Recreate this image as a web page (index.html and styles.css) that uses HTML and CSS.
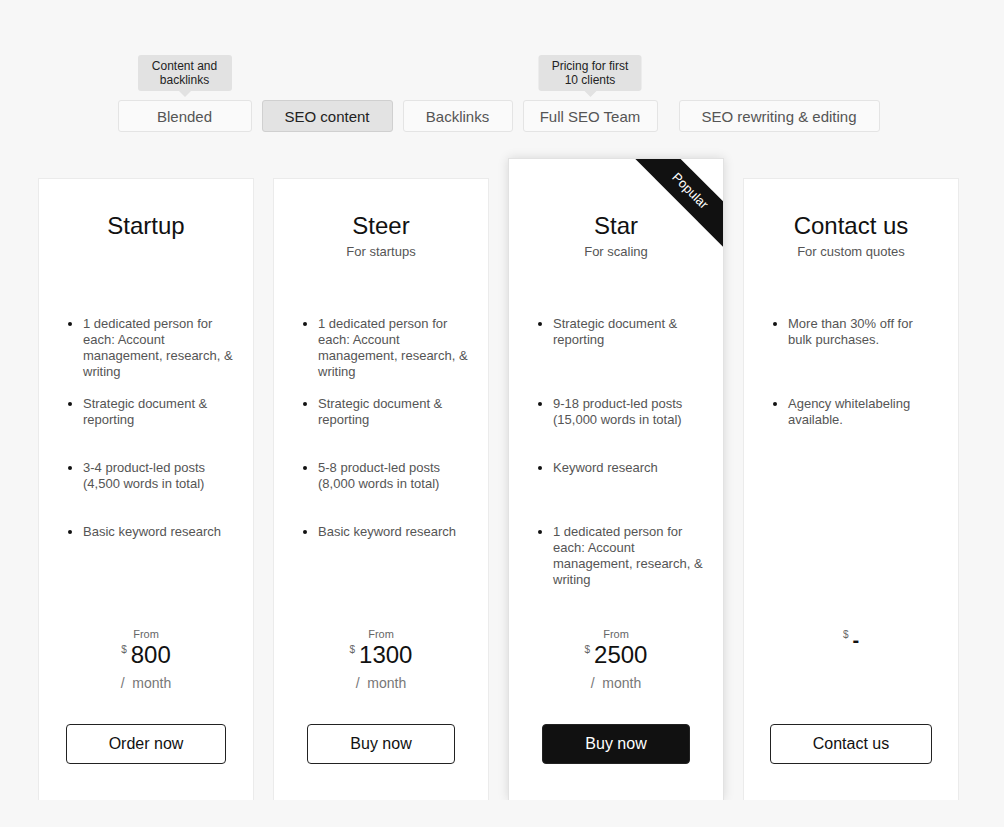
FILE: index.html
```html
<!DOCTYPE html>
<html lang="en">
<head>
    <meta charset="UTF-8">
    <meta name="viewport" content="width=device-width, initial-scale=1.0">
    <title>Pricing</title>
    <link rel="stylesheet" href="styles.css">
</head>
<body>
    <div class="page">
        <div class="tabs">
            <button class="tab tab-blended">
                Blended
                <span class="tip tip-blended">Content and backlinks</span>
            </button>
            <button class="tab tab-content active">SEO content</button>
            <button class="tab tab-backlinks">Backlinks</button>
            <button class="tab tab-team">
                Full SEO Team
                <span class="tip tip-team">Pricing for first 10 clients</span>
            </button>
            <button class="tab tab-rewrite">SEO rewriting &amp; editing</button>
        </div>

        <div class="plans">
            <div class="card">
                <h2 class="title">Startup</h2>
                <div class="subtitle"></div>
                <ul class="features">
                    <li>1 dedicated person for each: Account management, research, &amp; writing</li>
                    <li>Strategic document &amp; reporting</li>
                    <li>3-4 product-led posts (4,500 words in total)</li>
                    <li>Basic keyword research</li>
                </ul>
                <div class="pricing">
                    <div class="from">From</div>
                    <div class="price"><sup>$</sup>800</div>
                    <div class="period">/ &nbsp;month</div>
                </div>
                <button class="cta">Order now</button>
            </div>

            <div class="card">
                <h2 class="title">Steer</h2>
                <div class="subtitle">For startups</div>
                <ul class="features">
                    <li>1 dedicated person for each: Account management, research, &amp; writing</li>
                    <li>Strategic document &amp; reporting</li>
                    <li>5-8 product-led posts (8,000 words in total)</li>
                    <li>Basic keyword research</li>
                </ul>
                <div class="pricing">
                    <div class="from">From</div>
                    <div class="price"><sup>$</sup>1300</div>
                    <div class="period">/ &nbsp;month</div>
                </div>
                <button class="cta">Buy now</button>
            </div>

            <div class="card featured">
                <div class="ribbon">Popular</div>
                <h2 class="title">Star</h2>
                <div class="subtitle">For scaling</div>
                <ul class="features">
                    <li>Strategic document &amp; reporting</li>
                    <li>9-18 product-led posts (15,000 words in total)</li>
                    <li>Keyword research</li>
                    <li>1 dedicated person for each: Account management, research, &amp; writing</li>
                </ul>
                <div class="pricing">
                    <div class="from">From</div>
                    <div class="price"><sup>$</sup>2500</div>
                    <div class="period">/ &nbsp;month</div>
                </div>
                <button class="cta dark">Buy now</button>
            </div>

            <div class="card">
                <h2 class="title">Contact us</h2>
                <div class="subtitle">For custom quotes</div>
                <ul class="features">
                    <li>More than 30% off for bulk purchases.</li>
                    <li>Agency whitelabeling available.</li>
                </ul>
                <div class="pricing">
                    <div class="price dash"><sup>$</sup>-</div>
                </div>
                <button class="cta">Contact us</button>
            </div>
        </div>
    </div>
</body>
</html>
```

FILE: styles.css
```css
/* Reset */
*
{
    margin: 0;
    padding: 0;
    box-sizing: border-box;
}

body
{
    background-color: #f7f7f7;
    font-family: "Liberation Sans", Arial, sans-serif;
    color: #111;
    overflow: hidden;
}

.page
{
    width: 921px;
    margin-left: 38px;
    padding-top: 100px;
}

/* Tabs */
.tabs
{
    display: flex;
    justify-content: center;
    gap: 10px;
}

.tab
{
    position: relative;
    height: 32px;
    border: 1px solid #e4e4e4;
    border-radius: 3px;
    background-color: #fafafa;
    color: #555;
    font-family: inherit;
    font-size: 15px;
    cursor: pointer;
}

.tab.active
{
    background-color: #e3e3e3;
    border-color: #d0d0d0;
    color: #222;
}

.tab-blended { width: 134px; }
.tab-content { width: 131px; }
.tab-backlinks { width: 110px; }
.tab-team { width: 135px; }
.tab-rewrite { width: 201px; margin-left: 11px; }

.tip
{
    position: absolute;
    bottom: calc(100% + 10px);
    left: 50%;
    transform: translateX(-50%);
    padding: 4px 6px;
    border-radius: 3px;
    background-color: #e2e2e2;
    color: #222;
    font-size: 12px;
    line-height: 14px;
    text-align: center;
}

.tip::after
{
    content: "";
    position: absolute;
    top: 100%;
    left: 50%;
    margin-left: -6px;
    border: 6px solid transparent;
    border-top-color: #e2e2e2;
    border-bottom: 0;
}

.tip-blended { width: 94px; }
.tip-team { width: 103px; }

/* Plans - cut off at the bottom of the view */
.plans
{
    display: flex;
    align-items: flex-end;
    gap: 19px;
    margin-top: 6px;
    padding: 20px 0 0;
    overflow: hidden;
}

.card
{
    position: relative;
    display: flex;
    flex-direction: column;
    align-items: center;
    flex-shrink: 0;
    width: 216px;
    height: 622px;
    padding: 33px 0 0;
    border: 1px solid #ebebeb;
    border-bottom: none;
    background-color: #fff;
    overflow: hidden;
}

.card.featured
{
    height: 642px;
    padding-top: 53px;
    border-color: #e2e2e2;
    box-shadow: 0 0 10px rgba(0, 0, 0, 0.13);
}

.ribbon
{
    position: absolute;
    top: 16px;
    left: 101px;
    width: 160px;
    height: 32px;
    line-height: 32px;
    background-color: #111;
    color: #fff;
    font-size: 13px;
    text-align: center;
    transform: rotate(45deg);
}

.title
{
    font-size: 24px;
    line-height: 28px;
    font-weight: normal;
    color: #111;
}

.subtitle
{
    min-height: 16px;
    margin-top: 4px;
    font-size: 13px;
    line-height: 16px;
    color: #555;
}

.features
{
    align-self: stretch;
    height: 310px;
    margin-top: 56px;
    padding: 0 18px 0 44px;
    font-size: 13px;
    line-height: 16px;
    color: #555;
}

.features li
{
    min-height: 48px;
    margin-bottom: 16px;
}

.features li:first-child
{
    min-height: 64px;
}

.features li::marker
{
    color: #111;
}

.pricing
{
    height: 68px;
    text-align: center;
}

.from
{
    font-size: 11px;
    line-height: 16px;
    color: #666;
}

.price
{
    font-size: 24px;
    line-height: 26px;
    color: #111;
}

.price sup
{
    font-size: 10px;
    color: #666;
    vertical-align: top;
    line-height: 16px;
    margin-right: 4px;
}

.price.dash
{
    font-size: 20px;
    font-weight: bold;
    padding-top: 1px;
}

.price.dash sup
{
    font-weight: normal;
}

.period
{
    margin-top: 5px;
    font-size: 14px;
    line-height: 20px;
    color: #777;
}

.cta
{
    height: 40px;
    margin-top: 30px;
    padding: 0 42px;
    border: 1px solid #222;
    border-radius: 4px;
    background-color: #fff;
    color: #111;
    font-family: inherit;
    font-size: 16px;
    cursor: pointer;
}

.cta.dark
{
    background-color: #111;
    color: #fff;
}
```
